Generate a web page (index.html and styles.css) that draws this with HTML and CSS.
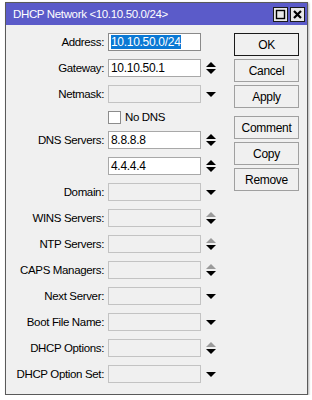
FILE: index.html
```html
<!DOCTYPE html>
<html>
<head>
    <title>DHCP Network</title>
    <link rel="stylesheet" href="styles.css">
</head>
<body>
    <div class="window">
        <div class="titlebar">
            <span class="title">DHCP Network &lt;10.10.50.0/24&gt;</span>
            <div class="title-buttons">
                <span class="tbtn"><svg width="11" height="11" viewBox="0 0 11 11"><rect x="1.5" y="1.5" width="8" height="8" fill="none" stroke="#000" stroke-width="1.4"/></svg></span>
                <span class="tbtn"><svg width="11" height="11" viewBox="0 0 11 11"><path d="M2 2 L9 9 M9 2 L2 9" stroke="#000" stroke-width="2.2"/></svg></span>
            </div>
        </div>

        <div class="content">
            <div class="form">
                <div class="row">
                    <label>Address:</label>
                    <div class="field active focused"><span class="sel">10.10.50.0/24</span></div>
                    <span class="arrow"></span>
                </div>
                <div class="row">
                    <label>Gateway:</label>
                    <div class="field active">10.10.50.1</div>
                    <span class="arrow"><svg width="10" height="14" viewBox="0 0 10 14"><path d="M0 6 L5 1 L10 6 Z" fill="#000"/><path d="M0 8 L10 8 L5 13 Z" fill="#000"/></svg></span>
                </div>
                <div class="row">
                    <label>Netmask:</label>
                    <div class="field"></div>
                    <span class="arrow"><svg width="10" height="14" viewBox="0 0 10 14"><path d="M0 5 L10 5 L5 10 Z" fill="#000"/></svg></span>
                </div>
                <div class="row check-row">
                    <label></label>
                    <div class="check"><span class="box"></span>No DNS</div>
                </div>
                <div class="row">
                    <label>DNS Servers:</label>
                    <div class="field active">8.8.8.8</div>
                    <span class="arrow"><svg width="10" height="14" viewBox="0 0 10 14"><path d="M0 6 L5 1 L10 6 Z" fill="#000"/><path d="M0 8 L10 8 L5 13 Z" fill="#000"/></svg></span>
                </div>
                <div class="row">
                    <label></label>
                    <div class="field active">4.4.4.4</div>
                    <span class="arrow"><svg width="10" height="14" viewBox="0 0 10 14"><path d="M0 6 L5 1 L10 6 Z" fill="#000"/><path d="M0 8 L10 8 L5 13 Z" fill="#000"/></svg></span>
                </div>
                <div class="row">
                    <label>Domain:</label>
                    <div class="field"></div>
                    <span class="arrow"><svg width="10" height="14" viewBox="0 0 10 14"><path d="M0 5 L10 5 L5 10 Z" fill="#000"/></svg></span>
                </div>
                <div class="row">
                    <label>WINS Servers:</label>
                    <div class="field"></div>
                    <span class="arrow"><svg width="10" height="14" viewBox="0 0 10 14"><path d="M0 6 L5 1 L10 6 Z" fill="#9a9a9a"/><path d="M0 8 L10 8 L5 13 Z" fill="#000"/></svg></span>
                </div>
                <div class="row">
                    <label>NTP Servers:</label>
                    <div class="field"></div>
                    <span class="arrow"><svg width="10" height="14" viewBox="0 0 10 14"><path d="M0 6 L5 1 L10 6 Z" fill="#9a9a9a"/><path d="M0 8 L10 8 L5 13 Z" fill="#000"/></svg></span>
                </div>
                <div class="row">
                    <label>CAPS Managers:</label>
                    <div class="field"></div>
                    <span class="arrow"><svg width="10" height="14" viewBox="0 0 10 14"><path d="M0 6 L5 1 L10 6 Z" fill="#9a9a9a"/><path d="M0 8 L10 8 L5 13 Z" fill="#000"/></svg></span>
                </div>
                <div class="row">
                    <label>Next Server:</label>
                    <div class="field"></div>
                    <span class="arrow"><svg width="10" height="14" viewBox="0 0 10 14"><path d="M0 5 L10 5 L5 10 Z" fill="#000"/></svg></span>
                </div>
                <div class="row">
                    <label>Boot File Name:</label>
                    <div class="field"></div>
                    <span class="arrow"><svg width="10" height="14" viewBox="0 0 10 14"><path d="M0 5 L10 5 L5 10 Z" fill="#000"/></svg></span>
                </div>
                <div class="row">
                    <label>DHCP Options:</label>
                    <div class="field"></div>
                    <span class="arrow"><svg width="10" height="14" viewBox="0 0 10 14"><path d="M0 6 L5 1 L10 6 Z" fill="#9a9a9a"/><path d="M0 8 L10 8 L5 13 Z" fill="#000"/></svg></span>
                </div>
                <div class="row">
                    <label>DHCP Option Set:</label>
                    <div class="field"></div>
                    <span class="arrow"><svg width="10" height="14" viewBox="0 0 10 14"><path d="M0 5 L10 5 L5 10 Z" fill="#000"/></svg></span>
                </div>
            </div>

            <div class="buttons">
                <button class="default">OK</button>
                <button>Cancel</button>
                <button>Apply</button>
                <button class="spaced">Comment</button>
                <button>Copy</button>
                <button>Remove</button>
            </div>
        </div>
    </div>
</body>
</html>
```

FILE: styles.css
```css
body {
    background-color: #ffffff;
    font-family: 'Liberation Sans', Arial, sans-serif;
    font-size: 11.5px;
    letter-spacing: -0.35px;
    color: #000000;
    margin: 0;
    padding: 2px 0 0 5px;
}
.window {
    width: 303px;
    height: 393px;
    border: 1px solid #5a5a5a;
    background-color: #f0f0f0;
    box-shadow: 1px 1px 2px #b0b0b0;
    box-sizing: border-box;
}
.titlebar {
    height: 22px;
    background-color: #5b5bc9;
    display: flex;
    align-items: center;
    justify-content: space-between;
    padding: 0 2px 0 7px;
}
.title {
    color: #ffffff;
    font-size: 11.5px;
}
.title-buttons {
    display: flex;
    gap: 2px;
}
.tbtn {
    width: 13px;
    height: 13px;
    border: 1px solid #1a1a1a;
    background-color: #e8e8e8;
    display: flex;
    align-items: center;
    justify-content: center;
}
.content {
    display: flex;
    padding-top: 8px;
}
.form {
    width: 222px;
}
.row {
    display: flex;
    align-items: center;
    height: 18px;
    margin-bottom: 8px;
}
.row label {
    width: 98px;
    text-align: right;
    padding-right: 4px;
    flex-shrink: 0;
}
.field {
    width: 93px;
    height: 18px;
    box-sizing: border-box;
    border: 1px solid #c3c3c3;
    background-color: #f0f0f0;
    padding: 1px 2px;
    line-height: 14px;
    font-size: 12px;
    letter-spacing: -0.3px;
}
.field.active {
    background-color: #ffffff;
    border-color: #a8a8a8;
}
.field.focused {
    border-color: #8a8a8a;
}
.sel {
    background-color: #0a78d4;
    color: #ffffff;
}
.arrow {
    width: 16px;
    margin-left: 2px;
    display: flex;
    justify-content: center;
}
.check-row {
    height: 12px;
}
.check {
    display: flex;
    align-items: center;
    gap: 4px;
}
.box {
    width: 11px;
    height: 11px;
    border: 1px solid #8c8c8c;
    background-color: #ffffff;
}
.buttons {
    display: flex;
    flex-direction: column;
    gap: 3px;
    padding-left: 6px;
    padding-top: 0;
}
button {
    width: 65px;
    height: 23px;
    font-family: 'Liberation Sans', Arial, sans-serif;
    font-size: 12px;
    letter-spacing: -0.3px;
    background-color: #f0f0f0;
    border: 1px solid #a0a0a0;
    padding: 0;
    color: #000000;
}
button.default {
    border: 1px solid #1a1a1a;
}
button.spaced {
    margin-top: 5px;
}
```
